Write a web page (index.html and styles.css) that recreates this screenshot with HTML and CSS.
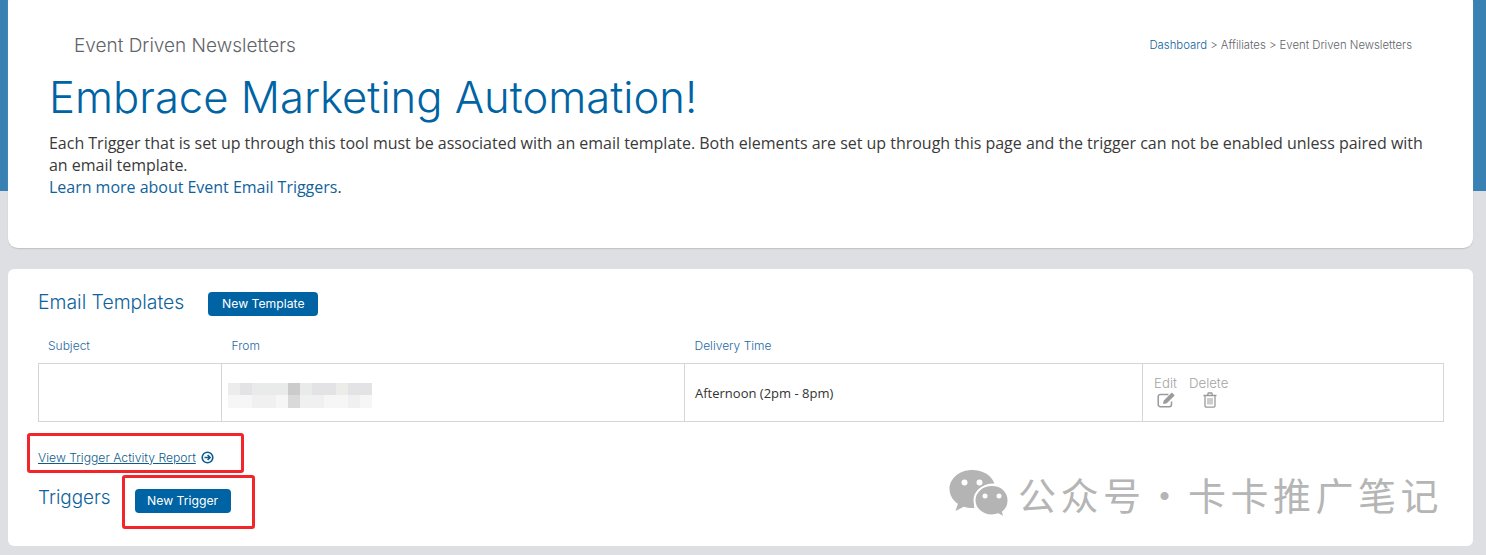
FILE: index.html
```html
<!DOCTYPE html>
<html lang="en">
<head>
<meta charset="utf-8">
<title>Event Driven Newsletters</title>
<link rel="stylesheet" href="styles.css">
</head>
<body>
<div class="page">
  <section class="card intro">
    <div class="topline">
      <h2 class="page-name">Event Driven Newsletters</h2>
      <nav class="crumbs"><a href="#">Dashboard</a> &gt; Affiliates &gt; Event Driven Newsletters</nav>
    </div>
    <h1 class="headline">Embrace Marketing Automation!</h1>
    <p class="lead">Each Trigger that is set up through this tool must be associated with an email template. Both elements are set up through this page and the trigger can not be enabled unless paired with an email template.<br><a href="#">Learn more about Event Email Triggers</a>.</p>
  </section>

  <section class="card main">
    <div class="section-head templates-head">
      <h3 class="section-title">Email Templates</h3>
      <a class="btn btn-template" href="#">New Template</a>
    </div>
    <table class="grid">
      <colgroup><col class="c1"><col class="c2"><col class="c3"><col class="c4"></colgroup>
      <thead>
        <tr><th>Subject</th><th>From</th><th>Delivery Time</th><th></th></tr>
      </thead>
      <tbody>
        <tr>
          <td></td>
          <td class="from-cell">
            <div class="blur">
              <i class="b1"></i><i class="b2"></i><i class="b3"></i><i class="b3"></i><i class="b3"></i><i class="b4"></i><i class="b3"></i><i class="b2"></i><i class="b2"></i><i class="b5"></i><i class="b2"></i><i class="b2"></i>
              <i class="b6"></i><i class="b6"></i><i class="b7"></i><i class="b7"></i><i class="b6"></i><i class="b8"></i><i class="b7"></i><i class="b7"></i><i class="b6"></i><i class="b6"></i><i class="b7"></i><i class="b6"></i>
            </div>
          </td>
          <td class="time-cell">Afternoon (2pm - 8pm)</td>
          <td class="action-cell">
            <div class="actions">
              <a class="action" href="#">Edit
                <svg class="icon" width="20" height="16" viewBox="0 0 20 16" fill="none" stroke="#9a9a9a" stroke-width="1.5"><path d="M14.5 9.5v3a2.2 2.2 0 0 1-2.2 2.2H3.4a2.2 2.2 0 0 1-2.2-2.2V4.6a2.2 2.2 0 0 1 2.2-2.2h8"/><path d="M6.6 11.4l.7-3L14.8 1l2.4 2.4-7.500 7.400z" fill="#9a9a9a" stroke-width="1"/></svg>
              </a>
              <a class="action" href="#">Delete
                <svg class="icon" width="14" height="16" viewBox="0 0 14 16" fill="none" stroke="#9a9a9a" stroke-width="1.3"><path d="M.5 3.500h13M2 3.500v10.300a1.300 1.300 0 0 0 1.300 1.300h7.400a1.300 1.300 0 0 0 1.300-1.300V3.500M4.500 3.300l.8-2.300h3.400l.8 2.300"/><path d="M5 6v6.500M7 6v6.500M9 6v6.500" stroke-width="1"/></svg>
              </a>
            </div>
          </td>
        </tr>
      </tbody>
    </table>
    <div class="report-row">
      <a class="report" href="#">View Trigger Activity Report</a>
      <svg class="report-icon" width="13" height="13" viewBox="0 0 13 13" fill="none" stroke="#0f5c8c" stroke-width="1.600"><circle cx="6.500" cy="6.500" r="5.300"/><path d="M3.500 6.500h5.500M6.600 4l2.500 2.500L6.600 9"/></svg>
    </div>
    <div class="section-head triggers-head">
      <h3 class="section-title triggers-title">Triggers</h3>
      <a class="btn btn-trigger" href="#">New Trigger</a>
    </div>

    <div class="mark mark-report"></div>
    <div class="mark mark-trigger"></div>
    <div class="watermark">
      <svg width="60" height="50" viewBox="0 0 60 50"><path fill="#b4b4b4" d="M23 1C10.500 1 .5 9.500.5 20c0 6 3.300 11.300 8.400 14.800L6.500 42l8.300-4.300c2.600.8 5.300 1.300 8.200 1.300.8 0 1.600 0 2.300-.1C23 24 32 14.500 44.500 14.500c.3 0 .6 0 .9 0C43 6.800 34 1 23 1z"/><path fill="#b4b4b4" stroke="#fff" stroke-width="2" d="M43 16c-9.800 0-17.500 6.800-17.500 15.200S33.200 46.400 43 46.400c2.300 0 4.400-.4 6.400-1.100l6.300 3.500-1.700-5.800c3.500-2.800 5.500-7 5.500-11.500C59.500 22.800 52.800 16 43 16z"/><circle cx="15.500" cy="13.500" r="3" fill="#fff"/><circle cx="30.500" cy="13.500" r="3" fill="#fff"/><circle cx="36" cy="27" r="2.500" fill="#fff"/><circle cx="50" cy="27" r="2.500" fill="#fff"/></svg>
      <span class="wm-text">公众号 · 卡卡推广笔记</span>
    </div>
  </section>
</div>
</body>
</html>
```
FILE: styles.css
```css
* { box-sizing: border-box; }
html, body { margin: 0; padding: 0; }
body {
  height: 555px;
  overflow: hidden;
  background: linear-gradient(to bottom, #3980b3 0, #3980b3 191px, #dedfe3 191px);
  font-family: "Open Sans", "Liberation Sans", sans-serif;
  color: #3a3a3a;
}
a { color: #0f639c; text-decoration: none; }
.page { display: flex; flex-direction: column; gap: 20px; padding: 0 13px 0 8px; margin-top: -8px; }
.card { background: #fff; border-radius: 10px; }
.intro {
  height: 257px;
  padding: 38px 40px 0 41px;
  border-bottom: 1px solid #c4c5c8;
  box-shadow: 0 0 1px #b9babd;
}
.topline { display: flex; justify-content: space-between; align-items: center; height: 30px; padding-left: 25px; padding-right: 21px; }
.page-name { margin: 1px 0 0; font: 300 19px/30px Inter, sans-serif; color: #5f6468; }
.crumbs { font: 300 11.350px/30px Inter, sans-serif; color: #5f6468; }
.headline { margin: 11px 0 0; font: 300 43.600px/54px Inter, sans-serif; color: #0063a3; }
.lead { margin: 7px 0 0; font-size: 16px; letter-spacing: -0.02px; line-height: 22px; color: #3a3a3a; }
.main { position: relative; height: 277px; padding: 20px 29px 0 30px; border-radius: 6px; }
.section-head { display: flex; align-items: center; }
.templates-head { height: 26px; gap: 24px; }
.triggers-head { height: 26px; gap: 24px; margin-top: 19px; }
.section-title { margin: 0; font: 300 19.400px/26px Inter, sans-serif; color: #0f639c; }
.triggers-title { font-size: 18.900px; }
.btn {
  display: block; height: 24px; background: #0063a3; border-radius: 4px;
  color: #fff; font: 400 12.200px/24px Inter, sans-serif; text-align: center;
}
.btn-template { width: 110px; margin-top: 4px; }
.btn-trigger { width: 96px; margin-top: 6px; }
.grid { width: 1405px; margin-top: 18px; border-collapse: collapse; table-layout: fixed; }
.c1 { width: 183px; } .c2 { width: 463px; } .c3 { width: 458px; } .c4 { width: 301px; }
th { height: 30px; padding: 0 10px 4px; text-align: left; font: 300 12px/16px Inter, sans-serif; color: #1f6aa5; }
th:first-child { padding-left: 9.500px; }
td { height: 58px; padding: 0 10px; border: 1px solid #d5d5d5; vertical-align: middle; }
.from-cell { padding: 6px 6px 0; }
.blur { display: grid; grid-template-columns: repeat(12, 12px); grid-auto-rows: 12.500px; }
.blur i { display: block; }
.b1 { background: #ececec; } .b2 { background: #e3e3e5; } .b3 { background: #e9ebea; }
.b4 { background: #cbcbcb; } .b5 { background: #ecece8; } .b6 { background: #f6f6f6; }
.b7 { background: #f0f0f1; } .b8 { background: #d9d9d9; }
.time-cell { padding-top: 2px; font-size: 13px; color: #333; }
.action-cell { padding: 0 11px; }
.actions { display: flex; gap: 12px; }
.action { display: flex; flex-direction: column; align-items: center; color: #a3a3a3; font: 300 13.200px/15px Inter, sans-serif; }
.icon { display: block; margin: 1px 0 0 3px; }
.report-row { display: flex; align-items: center; gap: 5px; margin-top: 28px; height: 16px; }
.report { font: 300 12.200px/16px Inter, sans-serif; color: #0f5c8c; text-decoration: underline; }
.mark { position: absolute; border: 3px solid #f2262a; border-radius: 3px; }
.mark-report { left: 19px; top: 164px; width: 217px; height: 40px; }
.mark-trigger { left: 114px; top: 206px; width: 133px; height: 54px; }
.watermark { position: absolute; left: 941px; top: 200px; display: flex; align-items: center; gap: 9px; }
.wm-text { font: 400 38px/50px "Noto Sans CJK SC", sans-serif; letter-spacing: 4.500px; word-spacing: -13px; color: #b5b5b5; white-space: nowrap; }
```
